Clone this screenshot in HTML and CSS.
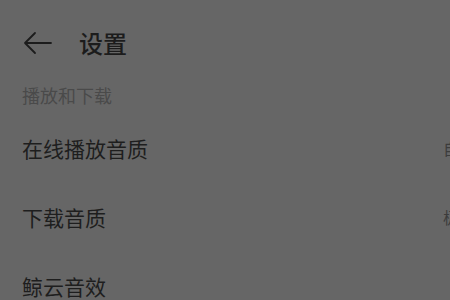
FILE: index.html
```html
<!DOCTYPE html>
<html lang="zh-CN">
<head>
<meta charset="utf-8">
<link rel="stylesheet" href="styles.css">
</head>
<body>
<div class="page">
  <header class="topbar">
    <svg class="back" width="30" height="24" viewBox="0 0 30 24">
      <path d="M2 12 H28 M12 2 L2 12 L12 22" fill="none" stroke="#1c1c1c" stroke-width="1.8" stroke-linecap="round" stroke-linejoin="round"/>
    </svg>
    <h1 class="title">设置</h1>
  </header>
  <div class="section-label">播放和下载</div>
  <ul class="list">
    <li class="row"><span class="label">在线播放音质</span><span class="value">自动</span></li>
    <li class="row"><span class="label">下载音质</span><span class="value">极高</span></li>
    <li class="row"><span class="label">鲸云音效</span><span class="value"></span></li>
  </ul>
</div>
</body>
</html>
```

FILE: styles.css
```css
html, body {
  margin: 0;
  padding: 0;
  background: #666666;
  overflow: hidden;
}
body {
  width: 450px;
  height: 300px;
  font-family: "Noto Sans CJK SC", "Noto Sans", sans-serif;
}
.page {
  width: 480px;
}
.topbar {
  height: 86px;
  display: flex;
  align-items: center;
  padding-left: 23px;
}
.back {
  display: block;
}
.title {
  margin: 0 0 0 26px;
  font-size: 24px;
  font-weight: 500;
  color: #1c1c1c;
  line-height: 1;
}
.section-label {
  padding-left: 22px;
  font-size: 18px;
  line-height: 18px;
  color: #4a4a4a;
  margin-bottom: 9px;
}
.list {
  list-style: none;
  margin: 0;
  padding: 0;
}
.row {
  height: 69px;
  display: flex;
  align-items: center;
  justify-content: space-between;
  padding: 0 5px 0 22px;
}
.label {
  font-size: 21px;
  color: #1e1e1e;
}
.value {
  font-size: 16px;
  color: #3c3c3c;
  width: 32px;
}
```
